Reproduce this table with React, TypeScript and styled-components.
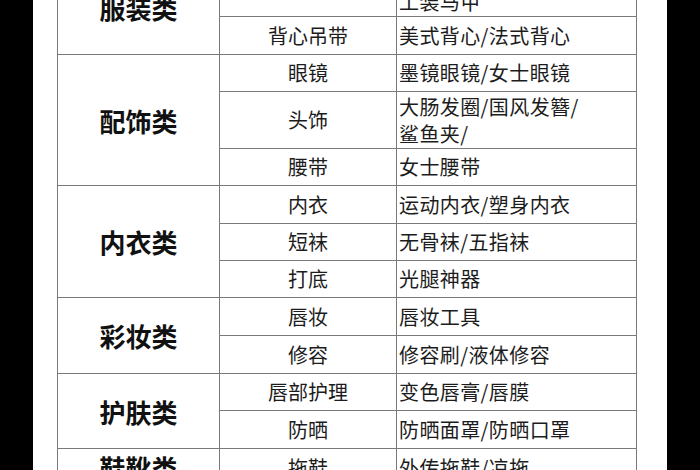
import React from 'react';
import styled, { createGlobalStyle } from 'styled-components';

const GlobalStyle = createGlobalStyle`
  html, body {
    margin: 0;
    padding: 0;
    background: #000;
  }
  * {
    box-sizing: border-box;
  }
`;

const Page = styled.div`
  width: 700px;
  height: 470px;
  padding: 0 33px;
  background: #000;
  overflow: hidden;
`;

const Sheet = styled.div`
  height: 470px;
  padding-left: 24px;
  background: #fff;
  overflow: hidden;
  font-family: "Noto Sans CJK SC", "Noto Sans", sans-serif;
  color: #1c1c1c;
`;

const Grid = styled.div`
  display: grid;
  grid-template-columns: 162px 177px 240px;
  width: 580px;
  margin-top: -41px;
  border-left: 1px solid #7a7a7a;
  border-top: 1px solid #7a7a7a;
`;

const Cell = styled.div`
  border-right: 1px solid #7a7a7a;
  border-bottom: 1px solid #7a7a7a;
  display: flex;
`;

const CategoryCell = styled(Cell)<{ $span: number }>`
  grid-column: 1;
  grid-row: span ${(p) => p.$span};
  align-items: center;
  justify-content: center;
  font-size: 26px;
  font-weight: 700;
  color: #111;
  padding-top: 0;
`;

const SubCell = styled(Cell)<{ $h: number }>`
  grid-column: 2;
  height: ${(p) => p.$h}px;
  align-items: center;
  justify-content: center;
  font-size: 20px;
  padding-bottom: 1px;
`;

const ItemCell = styled(Cell)`
  grid-column: 3;
  flex-direction: column;
  justify-content: center;
  padding: 0 0 1px 2px;
  font-size: 20px;
  line-height: 27px;
  letter-spacing: 0.4px;
  white-space: nowrap;
`;

type Row = { sub: string; items: string[]; h: number };
type Group = { name: string; rows: Row[] };

const groups: Group[] = [
  {
    name: '服装类',
    rows: [
      { sub: '马甲', items: ['西装外套/针织马甲/', '工装马甲'], h: 57 },
      { sub: '背心吊带', items: ['美式背心/法式背心'], h: 38 },
    ],
  },
  {
    name: '配饰类',
    rows: [
      { sub: '眼镜', items: ['墨镜眼镜/女士眼镜'], h: 37 },
      { sub: '头饰', items: ['大肠发圈/国风发簪/', '鲨鱼夹/'], h: 57 },
      { sub: '腰带', items: ['女士腰带'], h: 37 },
    ],
  },
  {
    name: '内衣类',
    rows: [
      { sub: '内衣', items: ['运动内衣/塑身内衣'], h: 38 },
      { sub: '短袜', items: ['无骨袜/五指袜'], h: 37 },
      { sub: '打底', items: ['光腿神器'], h: 37 },
    ],
  },
  {
    name: '彩妆类',
    rows: [
      { sub: '唇妆', items: ['唇妆工具'], h: 38 },
      { sub: '修容', items: ['修容刷/液体修容'], h: 38 },
    ],
  },
  {
    name: '护肤类',
    rows: [
      { sub: '唇部护理', items: ['变色唇膏/唇膜'], h: 37 },
      { sub: '防晒', items: ['防晒面罩/防晒口罩'], h: 38 },
    ],
  },
  {
    name: '鞋靴类',
    rows: [{ sub: '拖鞋', items: ['外传拖鞋/凉拖'], h: 38 }],
  },
];

const App: React.FC = () => {
  return (
    <Page>
      <GlobalStyle />
      <Sheet>
        <Grid>
          {groups.map((g) => (
            <React.Fragment key={g.name}>
              <CategoryCell $span={g.rows.length}>{g.name}</CategoryCell>
              {g.rows.map((r) => (
                <React.Fragment key={r.sub}>
                  <SubCell $h={r.h}>{r.sub}</SubCell>
                  <ItemCell>
                    {r.items.map((line) => (
                      <span key={line}>{line}</span>
                    ))}
                  </ItemCell>
                </React.Fragment>
              ))}
            </React.Fragment>
          ))}
        </Grid>
      </Sheet>
    </Page>
  );
};

export default App;
